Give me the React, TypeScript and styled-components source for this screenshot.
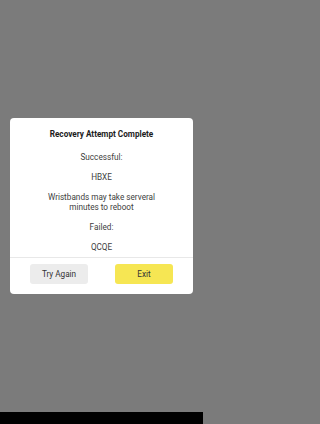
import React from 'react';
import styled, { createGlobalStyle } from 'styled-components';

const GlobalStyle = createGlobalStyle`
  html, body {
    margin: 0;
    padding: 0;
    height: 100%;
  }
  body {
    font-family: Roboto, "Liberation Sans", sans-serif;
    background: #7b7b7b;
  }
  #root {
    height: 100%;
  }
`;

const Screen = styled.div`
  display: flex;
  flex-direction: column;
  width: 203px;
  height: 424px;
  background: #000;
`;

const Overlay = styled.div`
  flex: 1;
  display: flex;
  align-items: center;
  justify-content: center;
  background: #7b7b7b;
  padding: 0 10px;
`;

const NavBar = styled.div`
  height: 12px;
  background: #000;
`;

const Dialog = styled.div`
  width: 183px;
  background: #fff;
  border-radius: 4px;
  display: flex;
  flex-direction: column;
`;

const Body = styled.div`
  display: flex;
  flex-direction: column;
  align-items: center;
  gap: 10px;
  padding: 11px 8px 5px;
  text-align: center;
`;

const Title = styled.div`
  font-size: 8.2px;
  line-height: 10px;
  font-weight: 700;
  color: #1c1c1c;
  margin-bottom: 3px;
`;

const Line = styled.div`
  font-size: 8.2px;
  line-height: 10px;
  color: #404040;
`;

const Footer = styled.div`
  display: grid;
  grid-template-columns: 58px 58px;
  justify-content: center;
  gap: 27px;
  padding: 6px 20px 10px;
  border-top: 1px solid #e8e8e8;
`;

const Button = styled.button<{ $primary?: boolean }>`
  height: 20px;
  border: none;
  border-radius: 3px;
  padding: 0;
  font-family: Roboto, "Liberation Sans", sans-serif;
  font-size: 8.2px;
  font-weight: 400;
  color: #333;
  background: ${p => (p.$primary ? '#f6e653' : '#ececec')};
`;

export default function App() {
  return (
    <>
      <GlobalStyle />
      <Screen>
        <Overlay>
          <Dialog>
            <Body>
              <Title>Recovery Attempt Complete</Title>
              <Line>Successful:</Line>
              <Line>HBXE</Line>
              <Line>
                Wristbands may take serveral
                <br />
                minutes to reboot
              </Line>
              <Line>Failed:</Line>
              <Line>QCQE</Line>
            </Body>
            <Footer>
              <Button>Try Again</Button>
              <Button $primary>Exit</Button>
            </Footer>
          </Dialog>
        </Overlay>
        <NavBar />
      </Screen>
    </>
  );
}
